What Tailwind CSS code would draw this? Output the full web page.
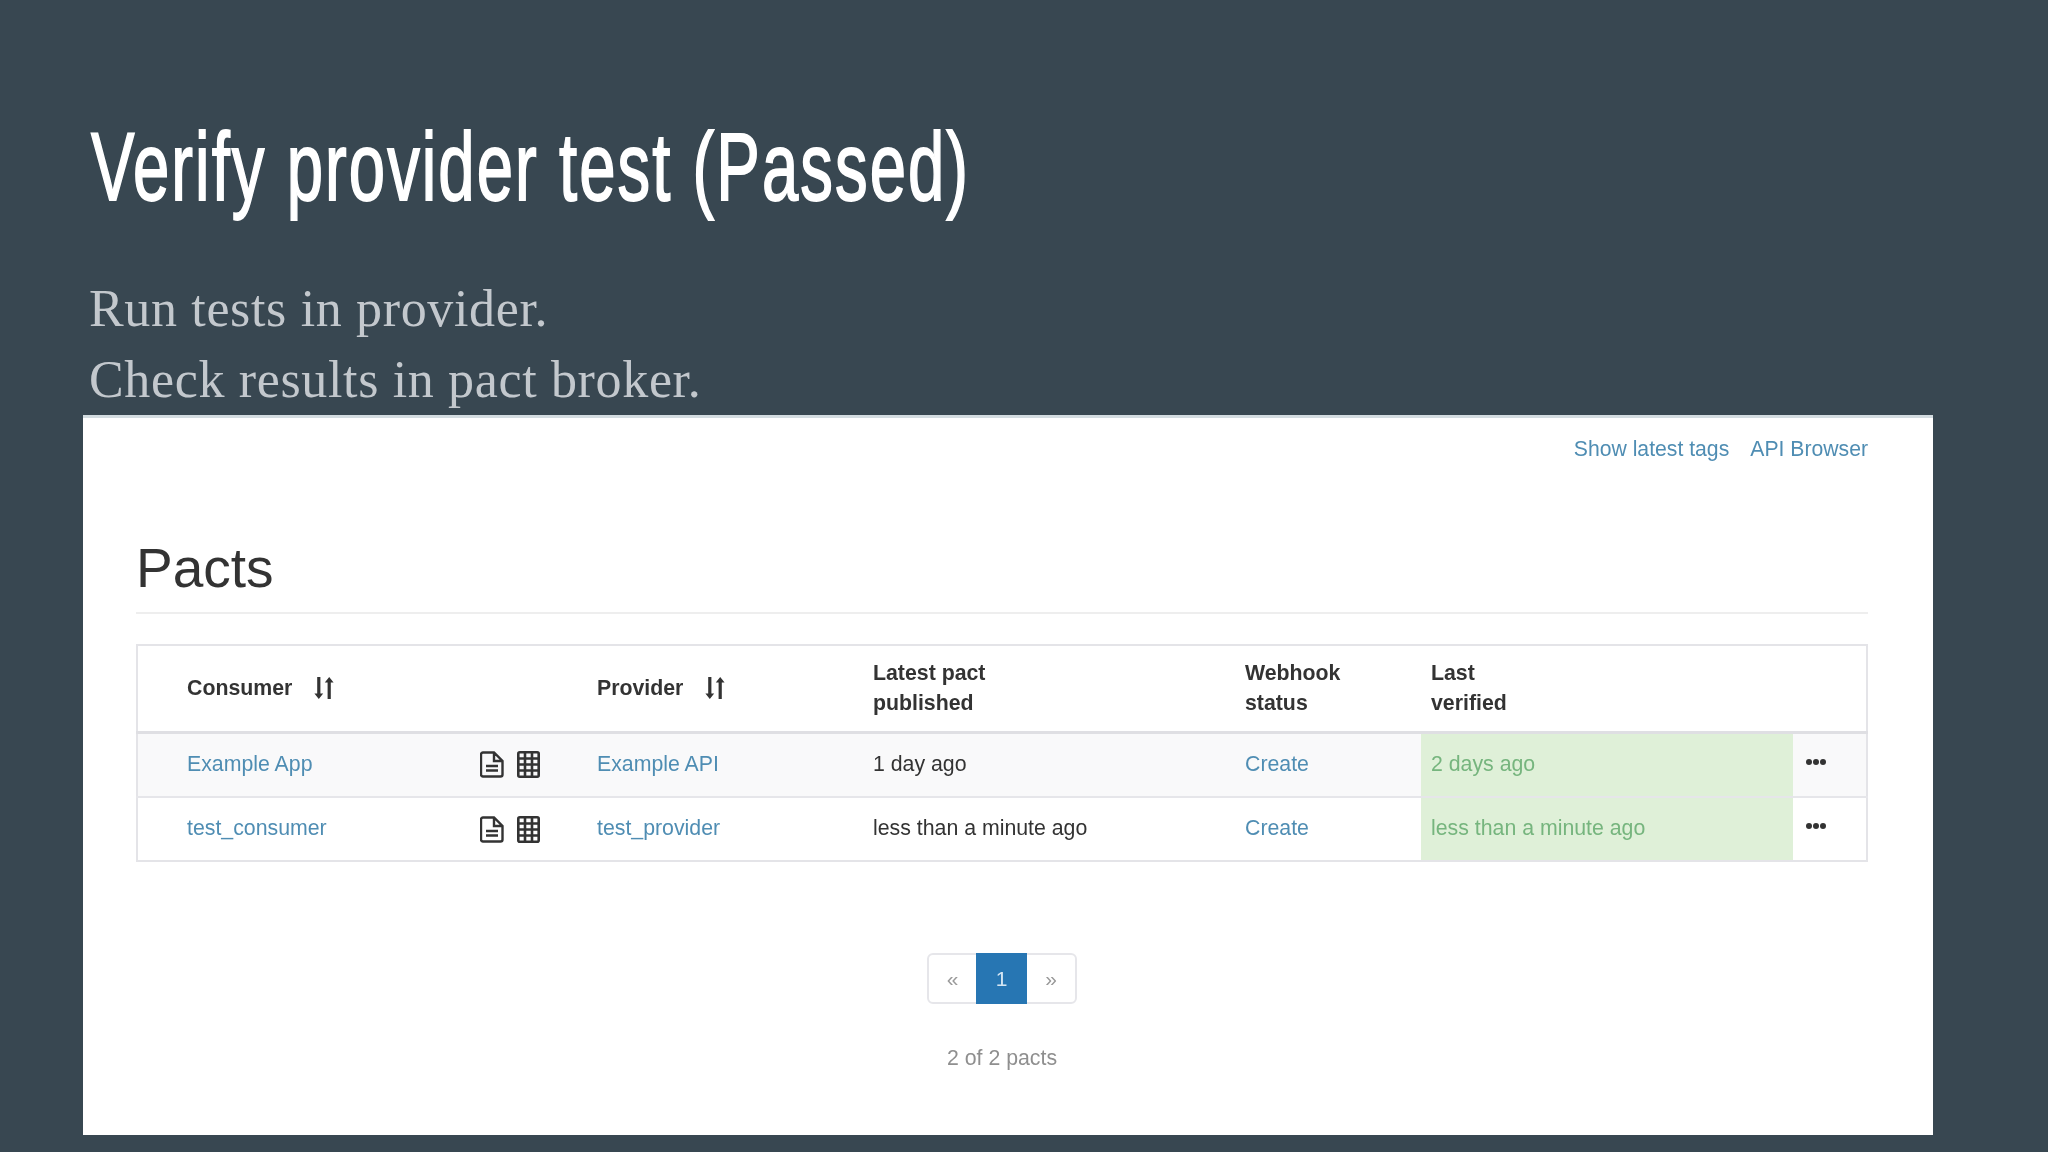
<!DOCTYPE html>
<html lang="en">
<head>
    <meta charset="UTF-8">
    <title>Verify provider test (Passed)</title>
    <script src="https://cdn.jsdelivr.net/npm/@tailwindcss/browser@4"></script>
</head>
<body class="bg-[#384751] w-[2048px] h-[1152px] overflow-hidden font-['Liberation_Sans',sans-serif]">
    <header class="pl-[91px] pt-[112px] h-[274px]">
        <h1 class="text-white text-[96px] leading-[110px] font-normal whitespace-nowrap origin-left scale-x-[0.68] tracking-[3px] [-webkit-text-stroke:1.8px_white] font-['Liberation_Sans_Narrow','Liberation_Sans',sans-serif]">Verify provider test (Passed)</h1>
    </header>
    <div class="pl-[89px] h-[141px] text-[#c3c8cd] text-[52px] tracking-[0.65px] leading-[70.5px] font-['Liberation_Serif',serif]">
        <p>Run tests in provider.</p>
        <p>Check results in pact broker.</p>
    </div>

    <main class="ml-[83px] w-[1850px] h-[720px] bg-white border-t-[3px] border-[#d3dce0] pl-[53px] pr-[65px] blur-[0.5px]">
        <nav class="flex justify-end gap-[21px] pt-[16px] h-[118px] text-[21.2px] leading-[30px] text-[#4f8db3]">
            <a>Show latest tags</a>
            <a>API Browser</a>
        </nav>
        <h2 class="text-[55px] leading-[64px] text-[#333] h-[78px] border-b-2 border-[#eeeeee]">Pacts</h2>

        <table class="mt-[30px] w-[1732px] table-fixed border-collapse border-2 border-[#e4e4e8] text-[21.3px] text-[#333]">
            <colgroup>
                <col class="w-[324px]"><col class="w-[127px]"><col class="w-[275px]"><col class="w-[372px]"><col class="w-[186px]"><col class="w-[372px]"><col>
            </colgroup>
            <thead>
                <tr class="h-[87px] border-b-[3px] border-[#dfdfe3] font-bold text-left leading-[30px]">
                    <th class="pl-[49px]">
                        <span class="inline-flex items-center gap-[21px]">Consumer
                            <svg class="w-[22px] h-[24px]" viewBox="0 0 22 24" fill="#333"><path d="M4.2 1h3.2v16.5h2.8l-4.4 5.5-4.4-5.500h2.800zM14.600 23h3.200V6.500h2.800L16.200 1l-4.400 5.500h2.800z"/></svg>
                        </span>
                    </th>
                    <th></th>
                    <th class="px-[9px]">
                        <span class="inline-flex items-center gap-[21px]">Provider
                            <svg class="w-[22px] h-[24px]" viewBox="0 0 22 24" fill="#333"><path d="M4.2 1h3.2v16.5h2.8l-4.4 5.5-4.4-5.500h2.800zM14.600 23h3.200V6.500h2.800L16.200 1l-4.400 5.500h2.800z"/></svg>
                        </span>
                    </th>
                    <th class="px-[10px]">Latest pact<br>published</th>
                    <th class="px-[10px]">Webhook<br>status</th>
                    <th class="px-[10px]">Last<br>verified</th>
                    <th></th>
                </tr>
            </thead>
            <tbody>
                <tr class="h-[65px] bg-[#f9f9fa] border-b-2 border-[#e6e6ea]">
                    <td class="pl-[49px] text-[#4f8db3]">Example App</td>
                    <td>
                        <span class="flex items-center gap-[13px] pl-[19px]">
                            <svg class="w-[24px] h-[27px]" viewBox="0 0 24 27" fill="none" stroke="#333" stroke-width="2.4"><path d="M3 1.500h11l8.500 8.500v13.500a2 2 0 0 1-2 2H3a2 2 0 0 1-2-2v-20a2 2 0 0 1 2-2zM14 1.500v8.500h8.500M6 15h12M6 19.500h12"/></svg>
                            <svg class="w-[23px] h-[27px]" viewBox="0 0 23 27" fill="none" stroke="#333" stroke-width="2.600"><rect x="1.300" y="1.300" width="20.400" height="24.400" rx="1.500"/><path d="M8 1v25M15 1v25M1 7.500h21M1 13.500h21M1 19.500h21"/></svg>
                        </span>
                    </td>
                    <td class="px-[9px] text-[#4f8db3]">Example API</td>
                    <td class="px-[10px]">1 day ago</td>
                    <td class="px-[10px] text-[#4f8db3]">Create</td>
                    <td class="px-[10px] bg-[#dff0d8] text-[#76b57e]">2 days ago</td>
                    <td class="pl-[12px] pb-[6px]">
                        <svg class="w-[22px] h-[8px]" viewBox="0 0 22 8" fill="#333"><circle cx="4" cy="4" r="3"/><circle cx="11" cy="4" r="3"/><circle cx="18" cy="4" r="3"/></svg>
                    </td>
                </tr>
                <tr class="h-[64px]">
                    <td class="pl-[49px] text-[#4f8db3]">test_consumer</td>
                    <td>
                        <span class="flex items-center gap-[13px] pl-[19px]">
                            <svg class="w-[24px] h-[27px]" viewBox="0 0 24 27" fill="none" stroke="#333" stroke-width="2.4"><path d="M3 1.500h11l8.500 8.500v13.500a2 2 0 0 1-2 2H3a2 2 0 0 1-2-2v-20a2 2 0 0 1 2-2zM14 1.500v8.500h8.500M6 15h12M6 19.500h12"/></svg>
                            <svg class="w-[23px] h-[27px]" viewBox="0 0 23 27" fill="none" stroke="#333" stroke-width="2.600"><rect x="1.300" y="1.300" width="20.400" height="24.400" rx="1.500"/><path d="M8 1v25M15 1v25M1 7.500h21M1 13.500h21M1 19.500h21"/></svg>
                        </span>
                    </td>
                    <td class="px-[9px] text-[#4f8db3]">test_provider</td>
                    <td class="px-[10px]">less than a minute ago</td>
                    <td class="px-[10px] text-[#4f8db3]">Create</td>
                    <td class="px-[10px] bg-[#dff0d8] text-[#76b57e]">less than a minute ago</td>
                    <td class="pl-[12px] pb-[6px]">
                        <svg class="w-[22px] h-[8px]" viewBox="0 0 22 8" fill="#333"><circle cx="4" cy="4" r="3"/><circle cx="11" cy="4" r="3"/><circle cx="18" cy="4" r="3"/></svg>
                    </td>
                </tr>
            </tbody>
        </table>

        <div class="flex justify-center mt-[91px] text-[21px]">
            <div class="flex h-[51px] w-[150px] border-2 border-[#e6e6ea] rounded-[6px] items-stretch text-[#999] leading-[47px] text-center">
                <span class="w-[47px]">«</span>
                <span class="w-[51px] -my-[2px] leading-[51px] bg-[#2776b3] text-[#d5e6f3]">1</span>
                <span class="flex-1">»</span>
            </div>
        </div>
        <p class="mt-[39px] text-center text-[21.3px] leading-[30px] text-[#8f8f8f]">2 of 2 pacts</p>
    </main>
</body>
</html>
